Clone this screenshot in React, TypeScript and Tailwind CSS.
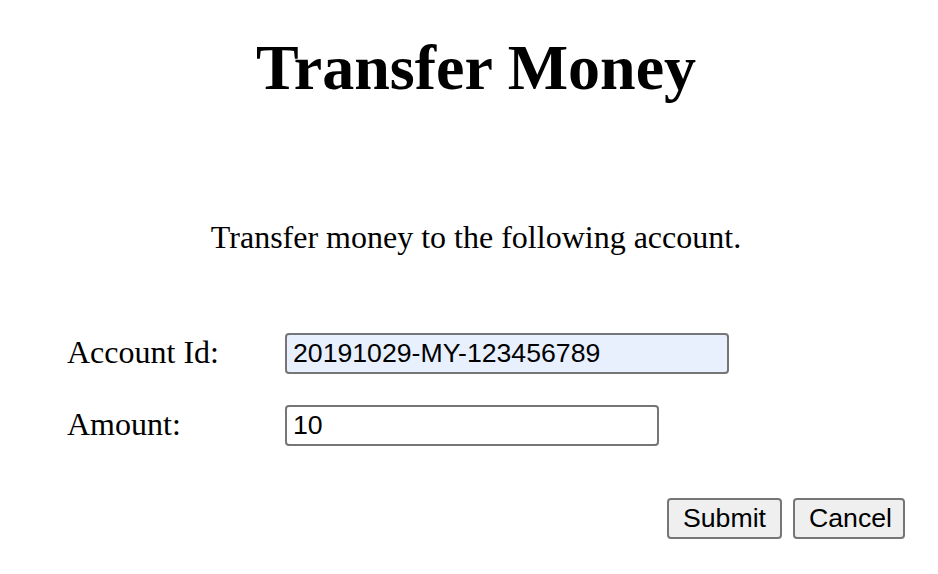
const inputClass =
  "h-[41px] rounded-[4px] border-2 border-[#767676] px-[6px] font-['Liberation_Sans',Arial,sans-serif] text-[26.67px] text-black outline-none";

const buttonClass =
  "h-[41px] rounded-[4px] border-2 border-[#767676] bg-[#efefef] px-[14px] font-['Liberation_Sans',Arial,sans-serif] text-[26.67px] leading-none text-black";

const App = () => {
  return (
    <div className="min-h-[574px] w-full bg-white font-['Liberation_Serif','Times_New_Roman',serif] text-black">
      {/* Header */}
      <div className="pl-[14px]">
        <h1 className="pt-[32px] text-center text-[64px] font-bold leading-[72px]">Transfer Money</h1>

        <p className="mt-[115px] text-center text-[32px] leading-[36px]">
          Transfer money to the following account.
        </p>
      </div>

      {/* Form */}
      <form className="mt-[78px] pl-[67px] pr-[33px]" onSubmit={(e) => e.preventDefault()}>
        <div className="flex flex-col gap-[31px]">
          <div className="flex items-center">
            <label className="w-[218px] pb-[3px] text-[32px] leading-[36px]">Account Id:</label>
            <input
              className={`${inputClass} w-[444px] bg-[#e8f0fe]`}
              defaultValue="20191029-MY-123456789"
            />
          </div>
          <div className="flex items-center">
            <label className="w-[218px] pb-[3px] text-[32px] leading-[36px]">Amount:</label>
            <input className={`${inputClass} w-[374px] bg-white`} defaultValue="10" />
          </div>
        </div>

        <div className="mt-[52px] flex justify-end gap-[11px]">
          <button type="submit" className={`${buttonClass} w-[115px]`}>
            Submit
          </button>
          <button type="button" className={`${buttonClass} w-[112px]`}>
            Cancel
          </button>
        </div>
      </form>
    </div>
  );
};

export default App;
